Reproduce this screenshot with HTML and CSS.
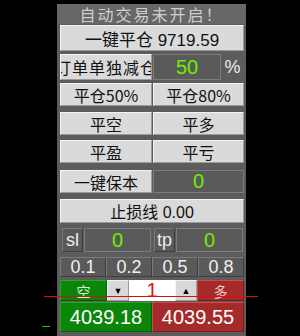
FILE: index.html
```html
<!DOCTYPE html>
<html lang="zh-CN">
<head>
	<meta charset="UTF-8">
	<title>Trade panel</title>
	<link rel="stylesheet" href="styles.css">
</head>
<body>
	<div class="panel">
		<div class="title">自动交易未开启！</div>

		<div class="row r-close"><div class="btn full big">一键平仓 9719.59</div></div>

		<div class="row r-split">
			<div class="btn half clip">订单单独减仓</div>
			<div class="field green w-pct">50</div>
			<div class="unit">%</div>
		</div>

		<div class="row r-pct">
			<div class="btn half">平仓50%</div>
			<div class="btn half">平仓80%</div>
		</div>

		<div class="row r-side">
			<div class="btn half">平空</div>
			<div class="btn half">平多</div>
		</div>

		<div class="row r-pl">
			<div class="btn half">平盈</div>
			<div class="btn half">平亏</div>
		</div>

		<div class="row r-be">
			<div class="btn half">一键保本</div>
			<div class="field green grow">0</div>
		</div>

		<div class="row r-stop"><div class="btn full">止损线 0.00</div></div>

		<div class="row r-sltp">
			<div class="tag">sl</div>
			<div class="field green grow">0</div>
			<div class="tag">tp</div>
			<div class="field green grow">0</div>
		</div>

		<div class="row r-lots">
			<div class="lot">0.1</div>
			<div class="lot">0.2</div>
			<div class="lot">0.5</div>
			<div class="lot">0.8</div>
		</div>

		<div class="row r-qty">
			<div class="side sell">空</div>
			<div class="arrow">▼</div>
			<div class="qty">1</div>
			<div class="arrow">▲</div>
			<div class="side buy">多</div>
		</div>

		<div class="row r-price">
			<div class="price sell">4039.18</div>
			<div class="price buy">4039.55</div>
		</div>
	</div>

	<div class="line red-line"></div>
	<div class="line green-line"></div>
</body>
</html>
```

FILE: styles.css
```css
body
{
	margin: 0;
	background: #000;
	width: 300px;
	height: 336px;
	overflow: hidden;
	position: relative;
	font-family: "Liberation Sans", "Noto Sans CJK SC", sans-serif;
}

.panel
{
	margin: 4px 0 0 57px;
	width: 189px;
	height: 332px;
	background: #5c5c5c;
	padding: 0 2px 0 3px;
	box-sizing: border-box;
	display: flex;
	flex-direction: column;
}

.title
{
	height: 20px;
	margin: 0 -2px 0 -3px;
	background: #676767;
	color: #cfcfcf;
	font-family: "Noto Sans CJK SC", sans-serif;
	font-size: 16px;
	line-height: 20px;
	text-align: center;
	letter-spacing: 2px;
}

.row
{
	display: flex;
}

.r-close { margin-top: 1px; height: 26px; }
.r-split { margin-top: 3px; height: 26px; }
.r-pct   { margin-top: 3px; height: 23px; }
.r-side  { margin-top: 6px; height: 23px; }
.r-pl    { margin-top: 5px; height: 23px; }
.r-be    { margin-top: 7px; height: 23px; }
.r-stop  { margin-top: 6px; height: 24px; }
.r-sltp  { margin-top: 5px; height: 24px; }
.r-lots  { margin-top: 5px; height: 20px; }
.r-qty   { margin-top: 3px; height: 21px; }
.r-price { margin-top: 1px; height: 30px; }

.btn
{
	background: #dadada;
	border: 1px solid;
	border-color: #f4f4f4 #9a9a9a #9a9a9a #f4f4f4;
	box-sizing: border-box;
	display: flex;
	align-items: center;
	justify-content: center;
	color: #111;
	font-family: "Noto Sans CJK SC", sans-serif;
	font-size: 16px;
	white-space: nowrap;
	overflow: hidden;
}

.full
{
	flex: 1;
	font-family: "Liberation Sans", "Noto Sans CJK SC", sans-serif;
	font-size: 16px;
}

.big
{
	font-size: 17px;
}

.half
{
	width: 92px;
	flex: none;
}

.half + .half
{
	width: auto;
	flex: 1;
	margin-left: 1px;
}

.clip
{
	letter-spacing: 1px;
}

.field
{
	background: #5a5a5a;
	border: 1px solid #7c7c7c;
	box-sizing: border-box;
	display: flex;
	align-items: center;
	justify-content: center;
	font-size: 20px;
}

.green
{
	color: #6cf000;
}

.w-pct
{
	width: 68px;
	margin-left: 1px;
}

.grow
{
	flex: 1;
	margin-left: 1px;
}

.unit
{
	flex: 1;
	color: #ececec;
	font-size: 18px;
	display: flex;
	align-items: center;
	justify-content: center;
}

.tag
{
	width: 21px;
	margin-left: 2px;
	background: #5a5a5a;
	border: 1px solid;
	border-color: #7a7a7a #3e3e3e #3e3e3e #7a7a7a;
	box-sizing: border-box;
	color: #eee;
	font-size: 18px;
	display: flex;
	align-items: center;
	justify-content: center;
}

.tag + .field
{
	margin-right: 1px;
}

.r-sltp .field + .tag
{
	margin-left: 2px;
}

.lot
{
	flex: 1;
	background: #5a5a5a;
	border: 1px solid;
	border-color: #7a7a7a #3e3e3e #3e3e3e #7a7a7a;
	box-sizing: border-box;
	color: #f0f0f0;
	font-size: 18px;
	display: flex;
	align-items: center;
	justify-content: center;
}

.side
{
	width: 47px;
	box-sizing: border-box;
	border: 1px solid;
	display: flex;
	align-items: center;
	justify-content: center;
	font-family: "Noto Sans CJK SC", sans-serif;
	font-size: 14px;
}

.side.sell
{
	background: #0b860b;
	border-color: #2aa82a #056005 #056005 #2aa82a;
	color: #d8f0d0;
}

.side.buy
{
	flex: 1;
	background: #a52b2b;
	border-color: #c85050 #7a1a1a #7a1a1a #c85050;
	color: #f0c8c8;
}

.arrow
{
	width: 22px;
	background: #d8d8d8;
	border: 1px solid;
	border-color: #f4f4f4 #9a9a9a #9a9a9a #f4f4f4;
	box-sizing: border-box;
	font-size: 9px;
	color: #000;
	display: flex;
	align-items: center;
	justify-content: center;
}

.qty
{
	width: 46px;
	background: #fff;
	color: #e01010;
	font-size: 20px;
	display: flex;
	align-items: center;
	justify-content: center;
}

.price
{
	flex: 1;
	box-sizing: border-box;
	border: 1px solid;
	color: #fff;
	font-size: 20px;
	display: flex;
	align-items: center;
	justify-content: center;
}

.price.sell
{
	background: #0b860b;
	border-color: #2aa82a #056005 #056005 #2aa82a;
}

.price.buy
{
	background: #a52b2b;
	border-color: #c85050 #7a1a1a #7a1a1a #c85050;
}

.line
{
	position: absolute;
	height: 1px;
}

.red-line
{
	left: 44px;
	width: 214px;
	top: 296px;
	background: #d81010;
}

.green-line
{
	left: 42px;
	width: 8px;
	top: 326px;
	background: #20c020;
}
```
